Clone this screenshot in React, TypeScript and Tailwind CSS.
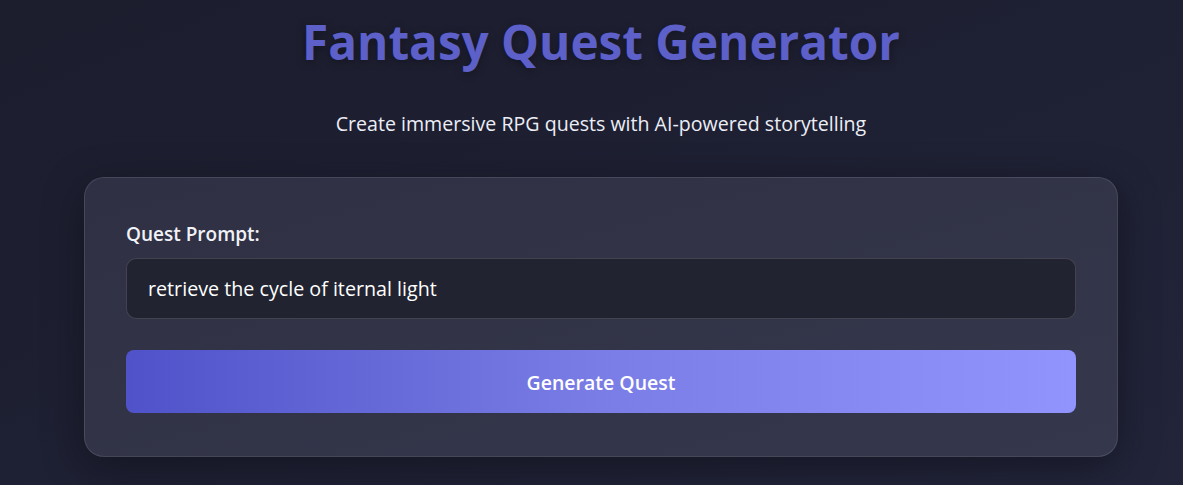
import { useState } from 'react';

export default function App() {
    const [prompt, setPrompt] = useState('retrieve the cycle of iternal light');

    return (
        <div className="min-h-screen bg-gradient-to-br from-[#1c1d2d] via-[#1e2033] to-[#22243a] pl-[19px] font-['Open_Sans',sans-serif] text-white">
            <div className="mx-auto flex max-w-[1034px] flex-col items-center pt-[10px]">
                <h1 className="text-[47.7px] leading-[64px] font-bold text-[#5c60c8] [text-shadow:0_2px_8px_rgba(0,0,0,0.35)]">
                    Fantasy Quest Generator
                </h1>
                <p className="mt-[36px] text-[19.6px] leading-[28px] text-[#eceef6]">
                    Create immersive RPG quests with AI-powered storytelling
                </p>

                <section className="mt-[39px] w-full rounded-[20px] border border-white/10 bg-gradient-to-br from-[#2f3043] to-[#35374c] px-[41px] pt-[43px] pb-[43px] shadow-[0_10px_40px_rgba(0,0,0,0.35)]">
                    <label className="block text-[19px] leading-[26px] font-semibold text-[#f1f2f8]">
                        Quest Prompt:
                    </label>
                    <input
                        value={prompt}
                        onChange={(e) => setPrompt(e.target.value)}
                        className="mt-[11px] block h-[61px] w-full rounded-[10px] border border-white/15 bg-[#222330] px-[21px] text-[19.7px] text-white outline-none"
                    />
                    <button
                        type="button"
                        className="mt-[31px] block h-[63px] w-full rounded-[8px] bg-gradient-to-r from-[#4f52c9] via-[#7a7de5] to-[#9094fc] pt-[3px] text-[19.5px] font-semibold text-white"
                    >
                        Generate Quest
                    </button>
                </section>
            </div>
        </div>
    );
}
